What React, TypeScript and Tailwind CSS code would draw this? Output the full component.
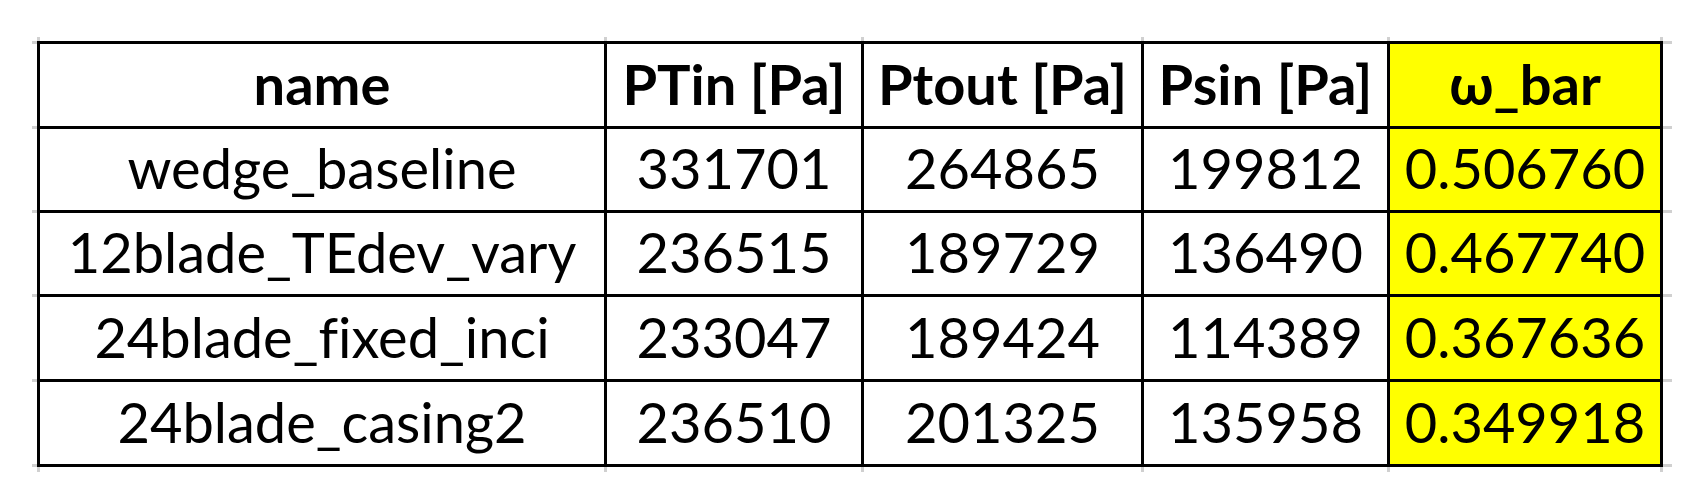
const columns = [
  { key: "name", label: "name", width: "w-[570px] border-l-[3px]" },
  { key: "ptin", label: "PTin [Pa]", width: "w-[257px]" },
  { key: "ptout", label: "Ptout [Pa]", width: "w-[280px]" },
  { key: "psin", label: "Psin [Pa]", width: "w-[246px]" },
  { key: "wbar", label: "ω_bar", width: "w-[273px]" },
];

const rows = [
  { name: "wedge_baseline", ptin: "331701", ptout: "264865", psin: "199812", wbar: "0.506760", h: "h-[84px]" },
  { name: "12blade_TEdev_vary", ptin: "236515", ptout: "189729", psin: "136490", wbar: "0.467740", h: "h-[84px]" },
  { name: "24blade_fixed_inci", ptin: "233047", ptout: "189424", psin: "114389", wbar: "0.367636", h: "h-[85px]" },
  { name: "24blade_casing2", ptin: "236510", ptout: "201325", psin: "135958", wbar: "0.349918", h: "h-[85px]" },
];

const TickRow = ({ height }: { height: string }) => (
  <div className={`flex ml-[5px] ${height}`}>
    {columns.map((col) => (
      <div key={col.key} className={`${col.width} border-r-[3px] border-[#d0d0d0]`} />
    ))}
  </div>
);

const App = () => {
  return (
    <div
      className="w-[1694px] h-[501px] bg-white pl-[32px] pt-[37px] text-black [font-variant-ligatures:none]"
      style={{ fontFamily: "Lato, 'Liberation Sans', sans-serif" }}
    >
      <TickRow height="h-[4px]" />

      <div className="flex h-[88px]">
        <div className="w-[5px] border-y-[3px] border-[#d0d0d0]" />
        {columns.map((col) => (
          <div
            key={col.key}
            className={`${col.width} flex items-end justify-center pb-[14px] border-y-[3px] border-r-[3px] border-black text-[56px] font-bold leading-none ${
              col.key === "wbar" ? "bg-[#ffff00]" : ""
            }`}
          >
            {col.label}
          </div>
        ))}
        <div className="w-[9px] border-y-[3px] border-[#d0d0d0]" />
      </div>

      {rows.map((row) => (
        <div key={row.name} className={`flex ${row.h}`}>
          <div className="w-[5px] border-b-[3px] border-[#d0d0d0]" />
          {columns.map((col) => (
            <div
              key={col.key}
              className={`${col.width} flex items-end justify-center pb-[14px] border-b-[3px] border-r-[3px] border-black text-[56px] leading-none ${
                col.key === "wbar" ? "bg-[#ffff00]" : ""
              }`}
            >
              {row[col.key as keyof typeof row]}
            </div>
          ))}
          <div className="w-[9px] border-b-[3px] border-[#d0d0d0]" />
        </div>
      ))}

      <TickRow height="h-[5px]" />
    </div>
  );
};

export default App;
